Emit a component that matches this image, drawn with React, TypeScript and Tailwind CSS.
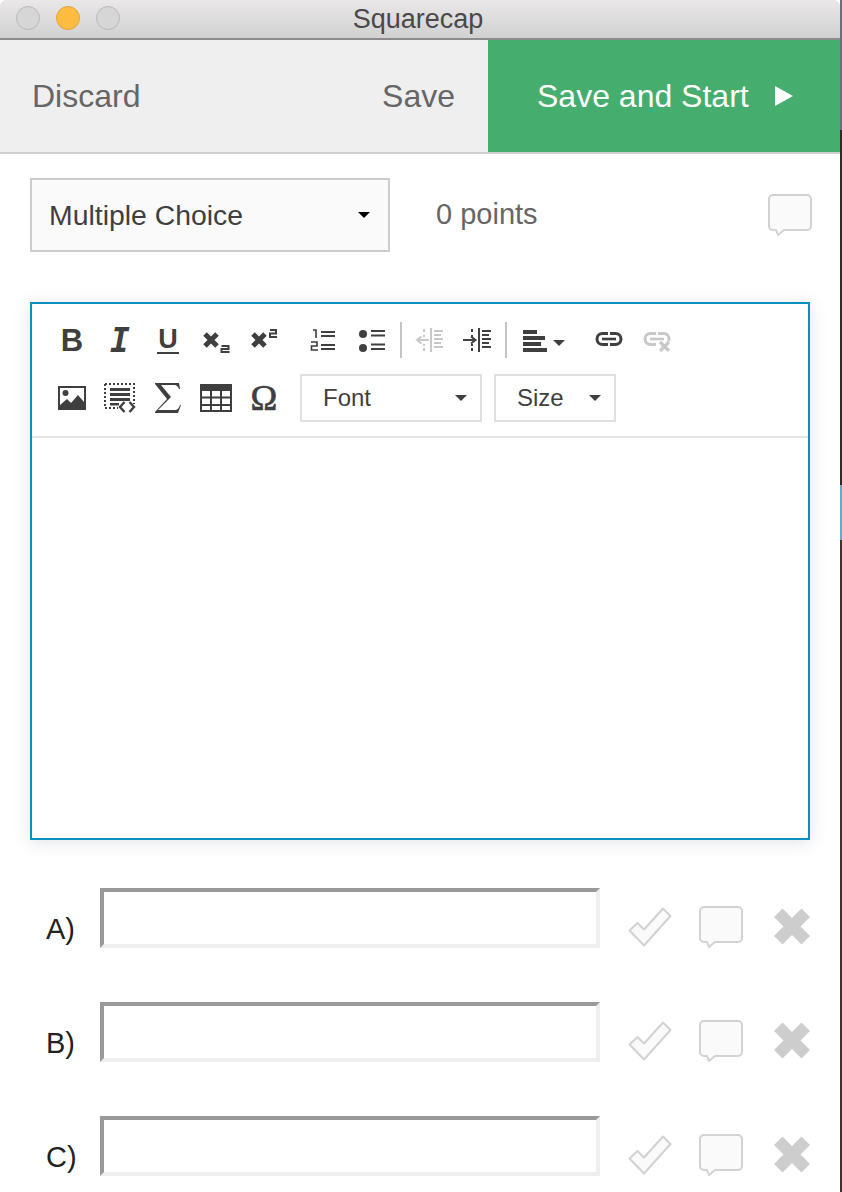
import type { FC, ReactNode } from 'react'

const SANS = "font-['Liberation_Sans',Arial,sans-serif]"

/** Small chat bubble used beside the points label and on each answer. */
const BubbleIcon: FC = () => (
  <svg width="44" height="42" viewBox="0 0 44 42" fill="none" aria-hidden="true">
    <path
      d="M5 1h34a4 4 0 0 1 4 4v27a4 4 0 0 1-4 4H16l-6 5-2-5H5a4 4 0 0 1-4-4V5a4 4 0 0 1 4-4z"
      fill="#fafafa"
      stroke="#d2d2d2"
      strokeWidth="2"
      strokeLinejoin="round"
    />
  </svg>
)

const CheckIcon: FC = () => (
  <svg width="44" height="40" viewBox="0 0 44 40" fill="none" aria-hidden="true">
    <path
      d="M1.5 23.5 9.5 16l6.5 6.5L35 1.5l7.5 7.5L16 38.5z"
      fill="#fafafa"
      stroke="#d2d2d2"
      strokeWidth="2"
      strokeLinejoin="round"
    />
  </svg>
)

const CrossIcon: FC = () => (
  <svg width="36" height="37" viewBox="0 0 38 38" aria-hidden="true">
    <path d="M9 0 19 10 29 0l9 9-10 10 10 10-9 9-10-10L9 38l-9-9 10-10L0 9z" fill="#cdcdcd" />
  </svg>
)

/** Editor toolbar cell: a fixed width box which centres its icon. */
const Cell: FC<{ w?: string; children: ReactNode }> = ({ w = 'w-12', children }) => (
  <div className={`flex h-9 shrink-0 items-center justify-center ${w}`}>{children}</div>
)

const ScriptIcon: FC<{ sup?: boolean }> = ({ sup }) => (
  <svg width="28" height="26" viewBox="0 0 28 26" fill="none" stroke="#3f3f3f" aria-hidden="true">
    <path d="M3 7 15 19M15 7 3 19" strokeWidth="5" />
    {sup ? (
      <path d="M20 3h6v3.500h-6V10h7" strokeWidth="2" />
    ) : (
      <path d="M19.500 19h7v3h-7v3h8" strokeWidth="2" />
    )}
  </svg>
)

const OrderedIcon: FC = () => (
  <svg width="26" height="26" viewBox="0 0 26 26" fill="none" stroke="#3f3f3f" aria-hidden="true">
    <path d="M12 5h14M12 9h14M12 18h14M12 22h14" strokeWidth="2" />
    <path d="M4 3h3v8M2 15h6v4H2.500v4H9" strokeWidth="1.600" />
  </svg>
)

const BulletIcon: FC = () => (
  <svg width="28" height="24" viewBox="0 0 28 24" aria-hidden="true">
    <circle cx="5" cy="6" r="4" fill="#3f3f3f" />
    <circle cx="5" cy="20" r="4" fill="#3f3f3f" />
    <path d="M13 3h14M13 7.500h14M13 16.500h14M13 21h14" stroke="#3f3f3f" strokeWidth="2" />
  </svg>
)

const IndentIcon: FC<{ out?: boolean }> = ({ out }) => {
  const c = out ? '#c8c8c8' : '#3f3f3f'
  return (
    <svg width="28" height="26" viewBox="0 0 28 26" fill="none" stroke={c} aria-hidden="true">
      <path d="M16 1v24" strokeWidth="2" />
      <path d="M19 4h9M19 8h7M19 12h9M19 16h7M19 20h9" strokeWidth="1.800" />
      <path d="M9 2v3M9 8v2M9 17v2M9 21v3" strokeWidth="2" />
      {out ? (
        <path d="M14 13H3M6.500 9.500 2 13l4.500 3.500" strokeWidth="2" />
      ) : (
        <path d="M0 13h11M8 9.500l4.500 3.500L8 16.500" strokeWidth="2" />
      )}
    </svg>
  )
}

const AlignIcon: FC = () => (
  <svg width="44" height="24" viewBox="0 0 44 24" aria-hidden="true">
    <path d="M0 2h14v4H0zM0 8h22v4H0zM0 14h18v4H0zM0 20h24v4H0z" fill="#3f3f3f" />
    <path d="M30 12h12l-6 6z" fill="#3f3f3f" />
  </svg>
)

const LinkIcon: FC<{ off?: boolean }> = ({ off }) => {
  const c = off ? '#c8c8c8' : '#3f3f3f'
  return (
    <svg width="30" height="24" viewBox="0 0 30 24" fill="none" stroke={c} aria-hidden="true">
      <path d="M14 5.500H8.500a5.500 5.500 0 0 0 0 11H14M16 5.500h5.500a5.500 5.500 0 0 1 0 11H16" strokeWidth="3" />
      <path d="M8 11h14" strokeWidth="2.600" />
      {off && (
        <>
          <path d="M15 13h15v11H15z" fill="#fff" stroke="none" />
          <path d="M18 14l9 9M27 14l-9 9" strokeWidth="3.200" />
        </>
      )}
    </svg>
  )
}

const ImageIcon: FC = () => (
  <svg width="28" height="24" viewBox="0 0 28 24" aria-hidden="true">
    <path d="M0 0h28v24H0z" fill="#3f3f3f" />
    <path d="M2 2h24v20H2z" fill="#fff" />
    <circle cx="7.500" cy="7" r="3" fill="#3f3f3f" />
    <path d="M2 22v-3l7-6 4 4 7-8 6 7v6z" fill="#3f3f3f" />
  </svg>
)

const SnippetIcon: FC = () => (
  <svg width="32" height="30" viewBox="0 0 32 30" fill="none" aria-hidden="true">
    <path d="M1 1h29v20" stroke="#3f3f3f" strokeWidth="2" strokeDasharray="2 2" />
    <path d="M1 1v24h13" stroke="#3f3f3f" strokeWidth="2" strokeDasharray="2 2" />
    <path d="M6 5h20v3H6zM6 10h20v3H6zM6 15h20v3H6zM6 20h9v2.500H6z" fill="#3f3f3f" />
    <path d="M20.500 19l-4.500 5 4.500 5M25.500 19l4.500 5-4.500 5" stroke="#3f3f3f" strokeWidth="2.400" />
  </svg>
)

const SigmaIcon: FC = () => (
  <svg width="28" height="30" viewBox="0 0 28 30" aria-hidden="true">
    <path
      d="M1 0h24l1 6h-1c-1-2-2-4-5-4H7l10 12L4 27h17c2.500 0 4-2 5-5h1l-3 8H1v-1l12-13L1 1z"
      fill="#3f3f3f"
    />
  </svg>
)

const TableIcon: FC = () => (
  <svg width="32" height="28" viewBox="0 0 32 28" aria-hidden="true">
    <path
      d="M0 0h32v28H0zM2 7v5.500h8V7zm10 0v5.500h8V7zm10 0v5.500h8V7zM2 14.500V20h8v-5.500zm10 0V20h8v-5.500zm10 0V20h8v-5.500zM2 22v4h8v-4zm10 0v4h8v-4zm10 0v4h8v-4z"
      fill="#3f3f3f"
      fillRule="evenodd"
    />
  </svg>
)

const Caret: FC = () => (
  <span className="h-0 w-0 border-x-[6px] border-t-[6px] border-x-transparent border-t-[#3f3f3f]" />
)

const Separator: FC<{ ml: string }> = ({ ml }) => (
  <span className={`h-9 w-0.5 shrink-0 bg-[#c4c4c4] ${ml}`} />
)

const AnswerRow: FC<{ label: string; last?: boolean }> = ({ label, last }) => (
  <div className={`flex h-[60px] items-start pl-[46px] ${last ? '' : 'mb-[54px]'}`}>
    <span className="mt-[23px] w-[54px] text-[29px] leading-9 text-[#222222]">{label}</span>
    <div className="h-[60px] w-[500px] border-4 border-t-[#999999] border-r-[#eeeeee] border-b-[#eeeeee] border-l-[#999999] bg-white" />
    <div className="ml-[28px] mt-[19px] flex w-[44px] justify-center">
      <CheckIcon />
    </div>
    <div className="ml-[27px] mt-[18px]">
      <BubbleIcon />
    </div>
    <div className="ml-[31px] mt-[20px]">
      <CrossIcon />
    </div>
  </div>
)

export default function App() {
  return (
    <div className={`flex h-[1192px] w-[842px] overflow-hidden bg-white ${SANS}`}>
      <main className="w-[840px] shrink-0">
        <header className="relative flex h-10 items-center justify-center rounded-t-md border-b-2 border-[#8c8c8c] bg-gradient-to-b from-[#e9e7e8] to-[#d2d1d2] pr-1">
          <div className="absolute left-4 top-[6px] flex gap-4">
            <span className="h-6 w-6 rounded-full border border-[#b9b9b9] bg-[#d6d6d6]" />
            <span className="h-6 w-6 rounded-full border border-[#e3a33a] bg-[#fdbb40]" />
            <span className="h-6 w-6 rounded-full border border-[#b9b9b9] bg-[#d6d6d6]" />
          </div>
          <span className="text-[27px] leading-none text-[#4a4849]">Squarecap</span>
        </header>

        <nav className="flex h-[114px] border-b-2 border-[#d0d0d0] bg-[#efefef]">
          <div className="flex flex-1 items-center justify-between pl-[32px] pr-[33px] text-[32px] text-[#666666]">
            <span>Discard</span>
            <span>Save</span>
          </div>
          <div className="flex w-[352px] items-center bg-[#45ad6e] pl-[49px] text-[32px] text-white">
            <span>Save and Start</span>
            <svg className="ml-[26px]" width="18" height="20" viewBox="0 0 18 20" aria-hidden="true">
              <path d="M0 0l18 10L0 20z" fill="#fff" />
            </svg>
          </div>
        </nav>

        <section className="flex items-center pl-[30px] pr-[28px] pt-6">
          <div className="flex h-[74px] w-[360px] items-center justify-between border-2 border-[#cccccc] bg-[#fafafa] pl-[17px] pr-[18px]">
            <span className="text-[28.4px] text-[#3f3f3f]">Multiple Choice</span>
            <span className="h-0 w-0 border-x-[6px] border-t-[6px] border-x-transparent border-t-black" />
          </div>
          <span className="ml-[46px] text-[29px] text-[#666666]">0 points</span>
          <div className="ml-auto">
            <BubbleIcon />
          </div>
        </section>

        <section className="ml-[30px] mt-[50px] h-[538px] w-[780px] border-2 border-[#0b8fbf] bg-white shadow-[0_2px_16px_rgba(60,80,100,0.16)]">
          <div className="h-[134px] border-b-2 border-[#e4e4e4] pl-4 pt-[18px]">
            <div className="flex items-center">
              <Cell>
                <span className="text-[31px] font-bold leading-none text-[#3f3f3f]">B</span>
              </Cell>
              <Cell>
                <span className="font-['DejaVu_Sans_Mono',monospace] text-[33px] font-bold italic leading-none text-[#3f3f3f]">
                  I
                </span>
              </Cell>
              <Cell>
                <span className="border-b-2 border-[#3f3f3f] px-px text-[27px] font-bold leading-[26px] text-[#3f3f3f]">
                  U
                </span>
              </Cell>
              <Cell>
                <ScriptIcon />
              </Cell>
              <Cell>
                <ScriptIcon sup />
              </Cell>
              <Cell w="w-12 ml-[10px]">
                <OrderedIcon />
              </Cell>
              <Cell w="w-12 ml-[2px]">
                <BulletIcon />
              </Cell>
              <Separator ml="ml-1" />
              <Cell w="w-[54px]">
                <IndentIcon out />
              </Cell>
              <Cell w="w-[42px]">
                <IndentIcon />
              </Cell>
              <Separator ml="ml-[7px]" />
              <Cell w="w-[76px]">
                <AlignIcon />
              </Cell>
              <Cell w="w-[52px]">
                <LinkIcon />
              </Cell>
              <Cell w="w-[44px]">
                <LinkIcon off />
              </Cell>
            </div>
            <div className="mt-4 flex items-center">
              <Cell>
                <ImageIcon />
              </Cell>
              <Cell>
                <SnippetIcon />
              </Cell>
              <Cell>
                <SigmaIcon />
              </Cell>
              <Cell>
                <TableIcon />
              </Cell>
              <Cell>
                <span className="font-['Liberation_Serif',serif] text-[36px] leading-none text-[#3f3f3f] [-webkit-text-stroke:0.7px_#3f3f3f]">
                  Ω
                </span>
              </Cell>
              <div className="ml-[12px] flex h-12 w-[182px] items-center justify-between border-2 border-[#e0e0e0] pl-[21px] pr-[13px] text-2xl text-[#3f3f3f]">
                <span>Font</span>
                <Caret />
              </div>
              <div className="ml-3 flex h-12 w-[122px] items-center justify-between border-2 border-[#e0e0e0] pl-[21px] pr-[13px] text-2xl text-[#3f3f3f]">
                <span>Size</span>
                <Caret />
              </div>
            </div>
          </div>
        </section>

        <section className="mt-[48px]">
          <AnswerRow label="A)" />
          <AnswerRow label="B)" />
          <AnswerRow label="C)" last />
        </section>
      </main>
      <div className="w-0.5 shrink-0 bg-[linear-gradient(to_bottom,#66707c_0,#66707c_130px,#2e2a26_130px,#2e2a26_485px,#6aa7cf_485px,#6aa7cf_540px,#3a342c_540px,#3a342c_100%)]" />
    </div>
  )
}
